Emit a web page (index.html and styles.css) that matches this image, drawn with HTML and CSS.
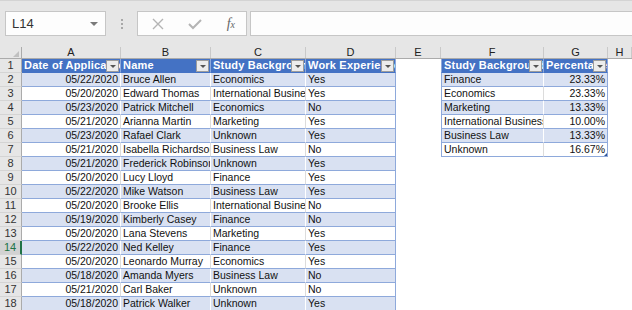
FILE: index.html
```html
<!DOCTYPE html>
<html lang="en">
<head>
  <meta charset="UTF-8">
  <title>Applications</title>
  <link rel="stylesheet" href="styles.css">
</head>
<body>
  <div class="topbar">
    <div class="namebox">
      <span>L14</span>
      <span class="caret"></span>
    </div>
    <div class="grip"><i></i><i></i><i></i></div>
    <div class="fxbuttons">
      <svg width="12" height="12" viewBox="0 0 12 12"><path d="M1 1 L11 11 M11 1 L1 11" stroke="#b4b4b4" stroke-width="1.4" fill="none"/></svg>
      <svg width="14" height="12" viewBox="0 0 14 12"><path d="M1 6 L5 10 L13 2" stroke="#b4b4b4" stroke-width="2" fill="none"/></svg>
      <span class="fx">f<sub>x</sub></span>
    </div>
    <div class="formula"></div>
  </div>

  <div class="sheet" id="sheet">
    <div class="row colhead">
      <div class="corner"><span></span></div>
      <div>A</div><div>B</div><div>C</div><div>D</div><div>E</div><div>F</div><div>G</div><div>H</div>
    </div>
  </div>

  <script>
    const rows = [
      ['05/22/2020', 'Bruce Allen', 'Economics', 'Yes'],
      ['05/20/2020', 'Edward Thomas', 'International Business', 'Yes'],
      ['05/23/2020', 'Patrick Mitchell', 'Economics', 'No'],
      ['05/21/2020', 'Arianna Martin', 'Marketing', 'Yes'],
      ['05/23/2020', 'Rafael Clark', 'Unknown', 'Yes'],
      ['05/21/2020', 'Isabella Richardson', 'Business Law', 'No'],
      ['05/21/2020', 'Frederick Robinson', 'Unknown', 'Yes'],
      ['05/20/2020', 'Lucy Lloyd', 'Finance', 'Yes'],
      ['05/22/2020', 'Mike Watson', 'Business Law', 'Yes'],
      ['05/20/2020', 'Brooke Ellis', 'International Business', 'No'],
      ['05/19/2020', 'Kimberly Casey', 'Finance', 'No'],
      ['05/20/2020', 'Lana Stevens', 'Marketing', 'Yes'],
      ['05/22/2020', 'Ned Kelley', 'Finance', 'Yes'],
      ['05/20/2020', 'Leonardo Murray', 'Economics', 'Yes'],
      ['05/18/2020', 'Amanda Myers', 'Business Law', 'No'],
      ['05/21/2020', 'Carl Baker', 'Unknown', 'No'],
      ['05/18/2020', 'Patrick Walker', 'Unknown', 'Yes']
    ];
    const summary = [
      ['Finance', '23.33%'],
      ['Economics', '23.33%'],
      ['Marketing', '13.33%'],
      ['International Business', '10.00%'],
      ['Business Law', '13.33%'],
      ['Unknown', '16.67%']
    ];
    const sheet = document.getElementById('sheet');

    function cell(text, cls) {
      const d = document.createElement('div');
      d.className = cls || '';
      if (text) d.textContent = text;
      return d;
    }

    function headCell(text, cls) {
      const d = cell('', 'tbl head ' + (cls || ''));
      const t = document.createElement('span');
      t.textContent = text;
      const b = document.createElement('span');
      b.className = 'filter';
      d.appendChild(t);
      d.appendChild(b);
      return d;
    }

    for (let r = 1; r <= 18; r++) {
      const row = document.createElement('div');
      const band = r % 2 === 0 ? ' band' : '';
      row.className = 'row';
      row.appendChild(cell(String(r), 'rownum' + (r === 14 ? ' active' : '')));

      if (r === 1) {
        row.appendChild(headCell('Date of Application'));
        row.appendChild(headCell('Name'));
        row.appendChild(headCell('Study Background'));
        row.appendChild(headCell('Work Experience', 'last'));
      } else {
        const d = rows[r - 2];
        row.appendChild(cell(d[0], 'tbl num' + band));
        row.appendChild(cell(d[1], 'tbl' + band));
        row.appendChild(cell(d[2], 'tbl' + band));
        row.appendChild(cell(d[3], 'tbl last' + band));
      }

      row.appendChild(cell(''));
      if (r === 1) {
        row.appendChild(headCell('Study Background', 'first'));
        row.appendChild(headCell('Percentage', 'last'));
      } else if (r <= 7) {
        const s = summary[r - 2];
        row.appendChild(cell(s[0], 'tbl first' + band));
        row.appendChild(cell(s[1], 'tbl num last' + band + (r === 7 ? ' end' : '')));
      } else {
        row.appendChild(cell(''));
        row.appendChild(cell(''));
      }
      row.appendChild(cell(''));
      sheet.appendChild(row);
    }
  </script>
</body>
</html>
```

FILE: styles.css
```css
body {
  margin: 0;
  background: #fff;
  font-family: "Liberation Sans", Arial, sans-serif;
  overflow: hidden;
}

.topbar {
  height: 45px;
  background: #e6e6e6;
  border-top: 1px solid #d4d4d4;
  box-sizing: border-box;
  display: flex;
  align-items: flex-start;
  padding: 10px 0 0 5px;
}
.namebox {
  width: 101px;
  height: 25px;
  box-sizing: border-box;
  background: #fdfdfd;
  border: 1px solid #c6c6c6;
  display: flex;
  align-items: center;
  justify-content: space-between;
  padding: 0 7px 0 6px;
  font-size: 13px;
  color: #333;
}
.caret {
  width: 0;
  height: 0;
  border-left: 4px solid transparent;
  border-right: 4px solid transparent;
  border-top: 4px solid #7a7a7a;
}
.grip {
  width: 31px;
  height: 25px;
  display: flex;
  flex-direction: column;
  align-items: center;
  justify-content: center;
  gap: 2px;
}
.grip i {
  width: 2px;
  height: 2px;
  background: #a8a8a8;
}
.fxbuttons {
  width: 110px;
  height: 25px;
  box-sizing: border-box;
  background: #fdfdfd;
  border: 1px solid #c6c6c6;
  display: flex;
  align-items: center;
  justify-content: space-between;
  padding: 0 11px 0 14px;
}
.fx {
  font-family: "Liberation Serif", serif;
  font-style: italic;
  font-size: 14px;
  color: #666;
}
.fx sub {
  font-size: 10px;
  vertical-align: 0;
}
.formula {
  flex: 1;
  height: 25px;
  box-sizing: border-box;
  margin-left: 3px;
  background: #fdfdfd;
  border: 1px solid #c6c6c6;
  border-right: none;
}

.row {
  display: grid;
  grid-template-columns: 22px 99px 90px 95px 90px 45px 103px 64px 1fr;
  height: 14px;
  font-size: 10.5px;
  line-height: 13px;
  color: #111;
}
.row > div {
  box-sizing: border-box;
  white-space: nowrap;
  overflow: hidden;
}

.colhead {
  background: #e6e6e6;
  border-bottom: 1px solid #ababab;
  box-sizing: border-box;
  color: #222;
  font-size: 11px;
}
.colhead > div {
  text-align: center;
  border-right: 1px solid #c9c9c9;
  margin-top: 2px;
  line-height: 11px;
}
.colhead .corner {
  position: relative;
  border-right: 1px solid #ababab;
}
.corner span {
  position: absolute;
  right: 2px;
  bottom: 1px;
  width: 0;
  height: 0;
  border-left: 6px solid transparent;
  border-bottom: 6px solid #c0c0c0;
}

.rownum {
  background: #e6e6e6;
  border-right: 1px solid #ababab;
  border-bottom: 1px solid #d4d4d4;
  text-align: center;
  color: #333;
  font-size: 11px;
}
.rownum.active {
  background: #d2d2d2;
  color: #217346;
  border-right: 2px solid #217346;
}

.tbl {
  padding: 0 2px 0 2px;
  border-bottom: 1px solid #8ea9db;
  border-right: 1px solid #dcdcdc;
}
.tbl.band {
  background: #d9e1f2;
  border-right-color: #fff;
}
.tbl.num {
  text-align: right;
}
.tbl.first {
  border-left: 1px solid #8ea9db;
}
.tbl.last {
  border-right: 1px solid #8ea9db;
}
.tbl.end {
  position: relative;
}
.tbl.end::after {
  content: "";
  position: absolute;
  right: 0;
  bottom: 0;
  border-left: 3px solid transparent;
  border-bottom: 3px solid #2f5597;
}

.tbl.head {
  position: relative;
  background: #4472c4;
  color: #fff;
  font-weight: bold;
  font-size: 11px;
  letter-spacing: 0.2px;
  border-right-color: #8ea9db;
  border-bottom-color: #4472c4;
}
.filter {
  position: absolute;
  right: 1px;
  top: 1px;
  width: 13px;
  height: 12px;
  box-sizing: border-box;
  background: #ececec;
  border: 1px solid #9c9c9c;
}
.filter::after {
  content: "";
  position: absolute;
  left: 3px;
  top: 4px;
  border-left: 3px solid transparent;
  border-right: 3px solid transparent;
  border-top: 3px solid #555;
}
```
